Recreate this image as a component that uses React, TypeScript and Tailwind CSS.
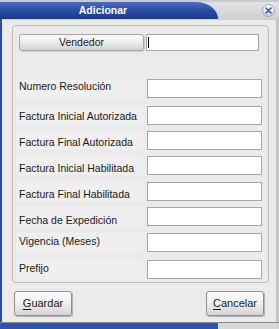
import React from "react";

const rows = [
  { label: "Numero Resolución", mt: "mt-[28px]", pt: "pt-[1px]" },
  { label: "Factura Inicial Autorizada", mt: "mt-[8px]", pt: "pt-[4px]" },
  { label: "Factura Final Autorizada", mt: "mt-[6px]", pt: "pt-[5px]" },
  { label: "Factura Inicial Habilitada", mt: "mt-[6px]", pt: "pt-[6px]" },
  { label: "Factura Final Habilitada", mt: "mt-[7px]", pt: "pt-[6px]" },
  { label: "Fecha de Expedición", mt: "mt-[6px]", pt: "pt-[7px]" },
  { label: "Vigencia (Meses)", mt: "mt-[7px]", pt: "pt-[2px]" },
  { label: "Prefijo", mt: "mt-[8px]", pt: "pt-[2px]" },
];

function Field({ w }: { w: string }) {
  return <div className={`${w} h-full bg-white border border-[#a7a7a7] shrink-0`} />;
}

function ActionButton({ first, rest }: { first: string; rest: string }) {
  return (
    <button className="w-[58px] h-[25px] rounded-[3px] border border-[#8f8f8f] bg-gradient-to-b from-[#fdfdfd] via-[#efefef] to-[#d4d4d4] shadow-[1px_1px_1px_rgba(0,0,0,0.25)] text-[11px] text-[#1a1a1a] flex items-center justify-center">
      <span className="underline underline-offset-[2px]">{first}</span>
      {rest}
    </button>
  );
}

export default function App() {
  return (
    <div className="w-[279px] h-[329px] flex flex-col bg-[#d6d6d6] font-['Liberation_Sans',Arial,sans-serif] overflow-hidden">
      {/* leftover strip above the window */}
      <div className="h-[2px] bg-[#c9ccd2]" />

      {/* title bar */}
      <div className="h-[17px] flex bg-gradient-to-b from-[#e4e4e4] to-[#cfcfcf]">
        <div className="w-[218px] h-full rounded-tr-[22px_17px] bg-gradient-to-b from-[#4a6dc0] via-[#2a4ca2] to-[#1d3c8e] flex items-center pr-[12px] justify-center">
          <span className="text-white font-bold text-[10.5px] leading-none">Adicionar</span>
        </div>
        <div className="flex-1 flex items-center justify-end pr-[4px]">
          <div className="w-[13px] h-[13px] rounded-full border border-[#9ea6b8] bg-gradient-to-b from-[#ffffff] to-[#c9cdd8] flex items-center justify-center">
            <svg width="7" height="7" viewBox="0 0 7 7">
              <path d="M1 1L6 6M6 1L1 6" stroke="#3a5a9e" strokeWidth="1.6" strokeLinecap="round" />
            </svg>
          </div>
        </div>
      </div>

      {/* window body */}
      <div className="flex-1 flex">
        <div className="w-[2px] bg-[#2d4f9f]" />
        <div className="flex-1 flex flex-col bg-[#ebebeb] border-t border-[#d0d0d0] pt-[5px] pl-[10px] pr-[7px]">
          {/* group panel */}
          <div className="w-[257px] h-[258px] rounded-[4px] border border-[#bdbdbd] bg-[#ebebeb] flex flex-col">
            <div className="mt-[8px] h-[17px] flex pl-[6px]">
              <button className="w-[125px] h-full rounded-[3px] border border-[#a6a6a6] bg-gradient-to-b from-[#fbfbfb] via-[#ececec] to-[#d2d2d2] shadow-[1px_1px_1px_rgba(0,0,0,0.15)] text-[10.5px] text-[#1a1a1a] leading-none">
                Vendedor
              </button>
              <div className="ml-[2px] w-[113px] h-full bg-white border border-[#a7a7a7] flex items-center pl-[1px]">
                <div className="w-[1px] h-[11px] bg-black" />
              </div>
            </div>

            {rows.map((r) => (
              <div key={r.label} className={`${r.mt} h-[19px] flex pl-[3px]`}>
                <div className={`w-[127px] h-full bg-[#efefef] pl-[3px] ${r.pt} text-[10.5px] leading-[13px] text-[#1a1a1a] whitespace-nowrap`}>
                  {r.label}
                </div>
                <div className="ml-[4px] h-full">
                  <Field w="w-[115px]" />
                </div>
              </div>
            ))}
          </div>

          {/* action buttons */}
          <div className="mt-[8px] flex justify-between pl-[2px] pr-[5px]">
            <ActionButton first="G" rest="uardar" />
            <ActionButton first="C" rest="ancelar" />
          </div>
        </div>
        <div className="w-[3px] bg-[#c4c4c4]" />
      </div>

      {/* bottom edge */}
      <div className="h-[1px] bg-[#8a8a8a]" />
      <div className="h-[6px] flex">
        <div className="w-[218px] bg-[#2d55b0]" />
        <div className="flex-1 bg-[#d8d8d8]" />
      </div>
    </div>
  );
}
